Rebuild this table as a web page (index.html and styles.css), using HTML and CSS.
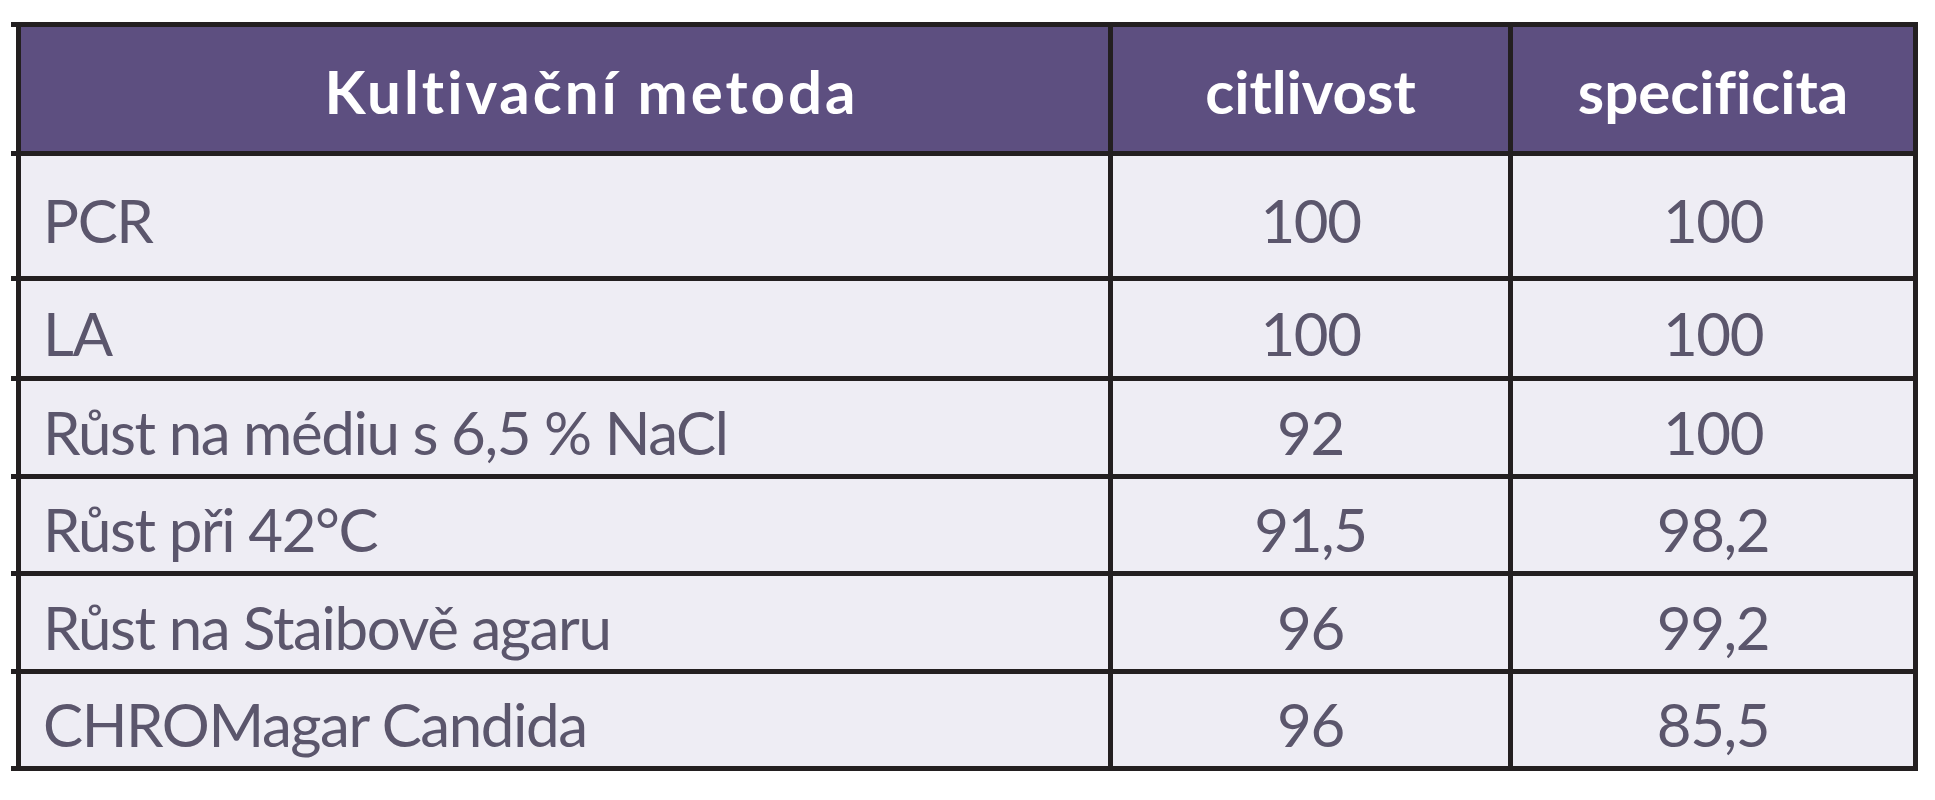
FILE: index.html
```html
<!DOCTYPE html>
<html lang="cs">
<head>
<meta charset="utf-8">
<title>Kultivační metoda</title>
<link rel="stylesheet" href="styles.css">
</head>
<body>
<div class="table">
  <div class="row head">
    <div class="cell c1">Kultivační metoda</div>
    <div class="cell c2">citlivost</div>
    <div class="cell c3">specificita</div>
  </div>
  <div class="row r-pcr">
    <div class="cell c1">PCR</div>
    <div class="cell c2">100</div>
    <div class="cell c3">100</div>
  </div>
  <div class="row r-la">
    <div class="cell c1">LA</div>
    <div class="cell c2">100</div>
    <div class="cell c3">100</div>
  </div>
  <div class="row r-std">
    <div class="cell c1">Růst na médiu s 6,5 % NaCl</div>
    <div class="cell c2">92</div>
    <div class="cell c3">100</div>
  </div>
  <div class="row r-short">
    <div class="cell c1">Růst při 42°C</div>
    <div class="cell c2">91,5</div>
    <div class="cell c3">98,2</div>
  </div>
  <div class="row r-std">
    <div class="cell c1">Růst na Staibově agaru</div>
    <div class="cell c2">96</div>
    <div class="cell c3">99,2</div>
  </div>
  <div class="row r-short last">
    <div class="cell c1">CHROMagar Candida</div>
    <div class="cell c2">96</div>
    <div class="cell c3">85,5</div>
  </div>
</div>
</body>
</html>
```
FILE: styles.css
```css
html, body {
  margin: 0;
  padding: 0;
  background: #ffffff;
}

body {
  font-family: "Lato", "Liberation Sans", sans-serif;
  font-variant-ligatures: none;
}

.table {
  margin: 22px 0 0 11px;
  width: 1907px;
}

.row {
  display: grid;
  grid-template-columns: 1092px 400px 410px;
  padding-left: 5px;
  border-top: 5px solid #231f20;
  box-sizing: border-box;
}

.row.last {
  border-bottom: 5px solid #231f20;
}

.cell {
  border-left: 5px solid #231f20;
  display: flex;
  align-items: center;
  font-size: 60px;
  line-height: 1;
  letter-spacing: -1.4px;
  color: #5b566c;
  background: #eeedf4;
  padding-top: 8px;
  box-sizing: border-box;
}

.cell.c1 {
  padding-left: 22px;
}

.cell.c2,
.cell.c3 {
  justify-content: center;
}

.cell.c3 {
  border-right: 5px solid #231f20;
}

.head .cell {
  background: #5d4f80;
  color: #ffffff;
  font-weight: 700;
  letter-spacing: 0;
  padding-top: 4px;
}

.head .cell.c1 {
  justify-content: center;
  padding-left: 54px;
  letter-spacing: 3px;
}

.head {
  height: 129px;
}

.r-pcr {
  height: 125px;
}

.r-la {
  height: 100px;
}

.r-std {
  height: 98px;
}

.r-short {
  height: 97px;
}

.row.last {
  height: 102px;
}
```
